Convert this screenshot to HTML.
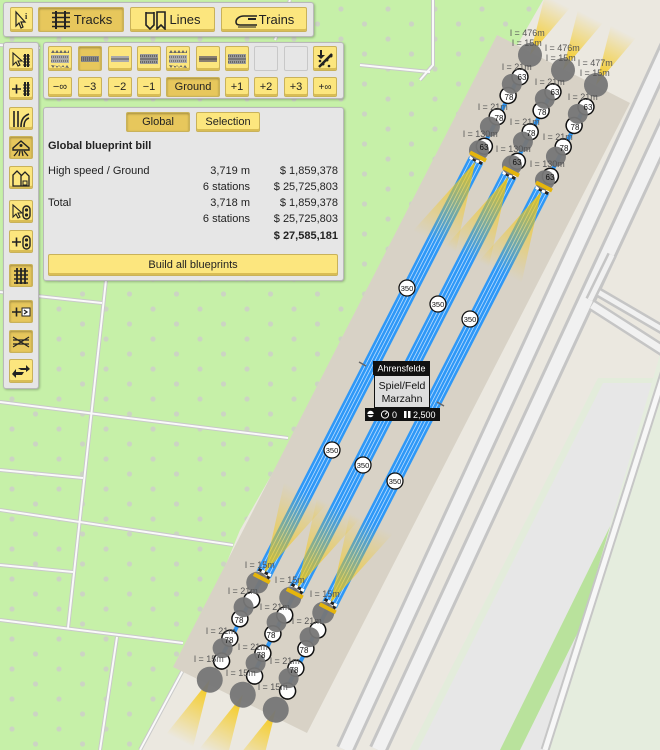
<!DOCTYPE html>
<html><head><meta charset="utf-8">
<style>
html,body{margin:0;padding:0;width:660px;height:750px;overflow:hidden;background:#ebe8e0;font-family:"Liberation Sans","DejaVu Sans",sans-serif;}
#wrap{position:relative;width:660px;height:750px;overflow:hidden}
#map{position:absolute;left:0;top:0}
.panel{position:absolute;background:#e6e6e6;border:1px solid #b9b9b9;border-radius:3px;box-shadow:1px 1px 2px rgba(0,0,0,.25);}
.btn{position:absolute;background:#fce67e;border:1px solid #c9b25a;border-radius:2px;box-shadow:inset 0 -2px 0 #d9bd55;box-sizing:border-box;font-size:13px;color:#222;display:flex;align-items:center;justify-content:center;}
.sel{background:#e7c75c;box-shadow:inset 0 1px 2px rgba(0,0,0,.3);}
.emp{background:#e6e6e6;border:1px solid #c8c8c8;box-shadow:none}
.sm{font-size:11px}
.t{position:absolute;font-size:11px;color:#222;white-space:nowrap}
.r{text-align:right}
</style></head><body><div id="wrap">
<svg id="map" width="660" height="750" viewBox="0 0 660 750">
<defs>
<pattern id="dots" width="47" height="30" patternUnits="userSpaceOnUse" x="8" y="5">
<circle cx="4" cy="4" r="2.6" fill="#ccd4c3"/><circle cx="27.5" cy="19" r="2.6" fill="#ccd4c3"/>
</pattern>
<linearGradient id="fo" x1="0" y1="0" x2="1" y2="0"><stop offset="0" stop-color="#f7c80c"/><stop offset="1" stop-color="#f7c80c" stop-opacity="0"/></linearGradient>
<linearGradient id="fo2" x1="0" y1="0" x2="1" y2="0"><stop offset="0" stop-color="#f7c80c" stop-opacity="0"/><stop offset="1" stop-color="#f7c80c"/></linearGradient>
<linearGradient id="fi" x1="0" y1="0" x2="1" y2="0"><stop offset="0" stop-color="#f7c80c" stop-opacity=".9"/><stop offset="1" stop-color="#f7c80c" stop-opacity="0"/></linearGradient>
<linearGradient id="fi2" x1="0" y1="0" x2="1" y2="0"><stop offset="0" stop-color="#f7c80c" stop-opacity="0"/><stop offset="1" stop-color="#f7c80c" stop-opacity=".9"/></linearGradient>
<g id="trk">
 <polygon points="0,0 -60,-14 -60,14" fill="url(#fo2)"/>
 <rect x="20" y="-2" width="660" height="4" fill="#2b95f5"/>
 <rect x="118" y="-8" width="466" height="16" fill="#2e98f7"/>
 <g stroke="#b9dcff" stroke-width=".8"><line x1="118" y1="-5" x2="584" y2="-5"/><line x1="118" y1="-1.5" x2="584" y2="-1.5"/><line x1="118" y1="1.5" x2="584" y2="1.5"/><line x1="118" y1="5" x2="584" y2="5"/></g>
 <polygon points="120,0 210,-24 210,24" fill="url(#fi)"/>
 <polygon points="582,0 492,-24 492,24" fill="url(#fi2)"/>
 <polygon points="702,0 770,-16 770,14" fill="url(#fo)"/>
 <rect x="114" y="-7" width="6" height="14" fill="#222"/><rect x="114" y="-7" width="3" height="3.5" fill="#fff"/><rect x="117" y="-3.5" width="3" height="3.5" fill="#fff"/><rect x="114" y="0" width="3" height="3.5" fill="#fff"/><rect x="117" y="3.5" width="3" height="3.5" fill="#fff"/>
 <rect x="580" y="-7" width="6" height="14" fill="#222"/><rect x="580" y="-7" width="3" height="3.5" fill="#fff"/><rect x="583" y="-3.5" width="3" height="3.5" fill="#fff"/><rect x="580" y="0" width="3" height="3.5" fill="#fff"/><rect x="583" y="3.5" width="3" height="3.5" fill="#fff"/>
 <g fill="#fff" stroke="#111" stroke-width="1.5"><circle cx="24" cy="-1" r="8"/><circle cx="46" cy="1" r="8"/><circle cx="70" cy="1" r="8"/><circle cx="102" cy="-1" r="8"/><circle cx="612" cy="-1" r="8"/><circle cx="634" cy="1" r="8"/><circle cx="656" cy="1" r="8"/><circle cx="680" cy="-2" r="8"/></g>
 <g fill="#777" opacity=".95"><circle cx="0" cy="0" r="12"/><circle cx="34" cy="3" r="10"/><circle cx="82" cy="3" r="10"/><circle cx="108" cy="2" r="10"/><circle cx="594" cy="2" r="11"/><circle cx="622" cy="3" r="10"/><circle cx="668" cy="3" r="10"/><circle cx="702" cy="0" r="13"/></g>
 <rect x="112" y="-9" width="4" height="18" fill="#e5b50c"/><rect x="586" y="-9" width="4" height="18" fill="#e5b50c"/>
</g>
</defs>
<polygon points="0,0 543,0 240,530 183,670 140,750 0,750" fill="#c6f0a8"/>
<polygon points="0,0 543,0 240,530 183,670 140,750 0,750" fill="url(#dots)"/>
<g stroke="#c9c9c9" stroke-width="4" fill="none" id="pth">
<path d="M433,0 L433,65 L420,80"/><path d="M0,45 L40,48"/><path d="M360,65 L430,72"/>
<path d="M106,280 L68,628"/><path d="M0,292 L102,303"/><path d="M0,402 L288,438"/><path d="M0,470 L83,478"/>
<path d="M0,510 L233,545"/><path d="M0,565 L73,572"/><path d="M0,620 L183,643"/><path d="M117,637 L100,750"/>
<path d="M183,670 L140,750"/><path d="M290,0 L275,40"/>
</g>
<g stroke="#fafafa" stroke-width="2" fill="none">
<path d="M433,0 L433,65 L420,80"/><path d="M0,45 L40,48"/><path d="M360,65 L430,72"/>
<path d="M106,280 L68,628"/><path d="M0,292 L102,303"/><path d="M0,402 L288,438"/><path d="M0,470 L83,478"/>
<path d="M0,510 L233,545"/><path d="M0,565 L73,572"/><path d="M0,620 L183,643"/><path d="M117,637 L100,750"/>
<path d="M183,670 L140,750"/><path d="M290,0 L275,40"/>
</g>
<polygon points="598,378 660,378 660,750 410,750" fill="#e3ecdb"/>
<polygon points="603,383 660,383 660,750 418,750" fill="#e7e7e7"/>
<polygon points="654,437 674,437 520,750 500,750" fill="#b9e29c"/>
<polygon points="705,200 760,200 760,750 545,750" fill="#e5edde"/>
<g fill="none"><path d="M700,260 L545,750" stroke="#c6c6c6" stroke-width="9"/><path d="M700,260 L545,750" stroke="#f7f7f7" stroke-width="5"/></g>
<g fill="none">
<path d="M690,0 L345,750" stroke="#c5c5c5" stroke-width="19"/><path d="M690,0 L345,750" stroke="#f1f1f1" stroke-width="13"/>
<path d="M725,0 L378,750" stroke="#c5c5c5" stroke-width="19"/><path d="M725,0 L378,750" stroke="#f1f1f1" stroke-width="13"/>
<path d="M592,305 L670,355" stroke="#c5c5c5" stroke-width="12"/><path d="M592,305 L670,355" stroke="#f1f1f1" stroke-width="7"/>
<path d="M598,292 L670,334" stroke="#c5c5c5" stroke-width="10"/><path d="M598,292 L670,334" stroke="#f1f1f1" stroke-width="5"/>
<path d="M612,255 L590,300" stroke="#c5c5c5" stroke-width="10"/><path d="M612,255 L590,300" stroke="#f1f1f1" stroke-width="5"/>
</g>
<polygon points="497,35 630,103 307,733 173,667" fill="#d8d2c6"/>

<use href="#trk" transform="translate(530,55) rotate(117.14)"/>
<use href="#trk" transform="translate(563,70) rotate(117.14)"/>
<use href="#trk" transform="translate(596,85) rotate(117.14)"/>

<g font-family="Liberation Sans, sans-serif" font-size="8" text-anchor="middle" fill="#111">
<text x="522" y="80">63</text><text x="509" y="100">78</text><text x="499" y="121">78</text><text x="484" y="150">63</text>
<text x="555" y="95">63</text><text x="542" y="115">78</text><text x="531" y="136">78</text><text x="517" y="165">63</text>
<text x="588" y="110">63</text><text x="575" y="130">78</text><text x="564" y="151">78</text><text x="550" y="180">63</text>
<text x="239" y="623">78</text><text x="229" y="643">78</text>
<text x="271" y="638">78</text><text x="261" y="658">78</text>
<text x="304" y="653">78</text><text x="294" y="673">78</text>
</g>
<g font-family="Liberation Sans, sans-serif" font-size="9" fill="#555">
<text x="510" y="36">l = 476m</text><text x="512" y="46">l = 15m</text>
<text x="545" y="51">l = 476m</text><text x="546" y="61">l = 15m</text>
<text x="578" y="66">l = 477m</text><text x="580" y="76">l = 15m</text>
<text x="502" y="70">l = 21m</text><text x="535" y="85">l = 21m</text><text x="568" y="100">l = 21m</text>
<text x="478" y="110">l = 21m</text><text x="510" y="125">l = 21m</text><text x="543" y="140">l = 21m</text>
<text x="463" y="137">l = 130m</text><text x="496" y="152">l = 130m</text><text x="530" y="167">l = 130m</text>
<text x="245" y="568">l = 15m</text><text x="275" y="583">l = 15m</text><text x="310" y="597">l = 15m</text>
<text x="228" y="594">l = 21m</text><text x="260" y="610">l = 21m</text><text x="292" y="624">l = 21m</text>
<text x="206" y="634">l = 21m</text><text x="238" y="650">l = 21m</text><text x="270" y="664">l = 21m</text>
<text x="194" y="662">l = 15m</text><text x="226" y="676">l = 15m</text><text x="258" y="690">l = 15m</text>
</g>
<g fill="#fff" stroke="#111" stroke-width="1.3">
<circle cx="407" cy="288" r="8"/><circle cx="438" cy="304" r="8"/><circle cx="470" cy="319" r="8"/>
<circle cx="332" cy="450" r="8"/><circle cx="363" cy="465" r="8"/><circle cx="395" cy="481" r="8"/>
</g>
<g font-family="Liberation Sans, sans-serif" font-size="7.5" text-anchor="middle" fill="#111">
<text x="407" y="291">350</text><text x="438" y="307">350</text><text x="470" y="322">350</text>
<text x="332" y="453">350</text><text x="363" y="468">350</text><text x="395" y="484">350</text>
</g>
<line x1="359" y1="362" x2="366" y2="366" stroke="#666" stroke-width="1.5"/><line x1="437" y1="402" x2="444" y2="406" stroke="#666" stroke-width="1.5"/>
<rect x="373" y="361" width="57" height="14" fill="#111"/>
<text x="401.5" y="371.5" font-family="Liberation Sans, sans-serif" font-size="9" fill="#fff" text-anchor="middle">Ahrensfelde</text>
<rect x="374.5" y="375.5" width="55" height="32" fill="#dedede" stroke="#111" stroke-width="1"/>
<text x="402" y="389" font-family="Liberation Sans, sans-serif" font-size="10.5" fill="#111" text-anchor="middle">Spiel/Feld</text>
<text x="402" y="402" font-family="Liberation Sans, sans-serif" font-size="10.5" fill="#111" text-anchor="middle">Marzahn</text>
<rect x="365" y="408" width="75" height="13" fill="#111"/>
<circle cx="370.5" cy="414" r="3.2" fill="#fff"/><rect x="367" y="414" width="7" height="1.2" fill="#111"/>
<circle cx="385" cy="414.5" r="3.6" fill="none" stroke="#fff" stroke-width="1"/><path d="M385,414.5 L387,412.5" stroke="#fff"/>
<text x="392" y="418" font-family="Liberation Sans, sans-serif" font-size="9" fill="#fff">0</text>
<rect x="404" y="411" width="2.5" height="7" fill="#fff"/><rect x="408" y="411" width="2.5" height="7" fill="#fff"/>
<text x="413" y="418" font-family="Liberation Sans, sans-serif" font-size="9" fill="#fff">2,500</text>
</svg>

<div class="panel" style="left:3px;top:2px;width:309px;height:33px"></div>
<div class="btn" style="left:10px;top:7px;width:23px;height:25px">
<svg width="18" height="20" viewBox="0 0 18 20"><path d="M3,2 L3,16 L6,13 L8,18 L10,17 L8,12 L12,12 Z" fill="none" stroke="#222" stroke-width="1.2"/><text x="12" y="9" font-size="8" font-weight="bold" font-family="Liberation Serif,serif" fill="#222">i</text></svg></div>
<div class="btn sel" style="left:38px;top:7px;width:86px;height:25px"><svg width="22" height="20" viewBox="0 0 22 20"><g stroke="#222" stroke-width="2"><line x1="6" y1="1" x2="6" y2="19"/><line x1="15" y1="1" x2="15" y2="19"/></g><g stroke="#222" stroke-width="1.6"><line x1="2" y1="3" x2="20" y2="3"/><line x1="2" y1="7.5" x2="20" y2="7.5"/><line x1="2" y1="12" x2="20" y2="12"/><line x1="2" y1="16.5" x2="20" y2="16.5"/></g></svg><span style="margin-left:2px">Tracks</span></div>
<div class="btn" style="left:130px;top:7px;width:85px;height:25px"><svg width="24" height="20" viewBox="0 0 24 20"><path d="M2,2 L2,15 L6,19 L10,15 L10,2 M2,3 L10,3" fill="none" stroke="#222" stroke-width="1.6"/><path d="M13,2 L13,19 L17,15 L21,19 L21,2 Z" fill="none" stroke="#222" stroke-width="1.6"/></svg><span style="margin-left:1px">Lines</span></div>
<div class="btn" style="left:221px;top:7px;width:86px;height:25px"><svg width="24" height="16" viewBox="0 0 24 16"><path d="M23,4 L10,4 C5,4 2,7 2,10 C2,12 3,13 6,13 L23,13" fill="none" stroke="#222" stroke-width="1.6"/><rect x="14" y="6" width="8" height="2" fill="#222"/><line x1="4" y1="15" x2="22" y2="15" stroke="#222"/></svg><span style="margin-left:1px">Trains</span></div>

<div class="panel" style="left:3px;top:42px;width:34px;height:345px"></div>
<div class="btn" style="left:9px;top:48px;width:24px;height:23px"><svg width="20" height="18" viewBox="0 0 20 18"><path d="M2,2 L2,14 L5,11 L7,15 L9,14 L7,10 L11,10 Z" fill="none" stroke="#222" stroke-width="1.1"/><rect x="13" y="3" width="2" height="13" fill="#222"/><rect x="16" y="3" width="2" height="13" fill="#222"/><g stroke="#222"><line x1="12" y1="5" x2="19" y2="5"/><line x1="12" y1="8" x2="19" y2="8"/><line x1="12" y1="11" x2="19" y2="11"/><line x1="12" y1="14" x2="19" y2="14"/></g></svg></div>
<div class="btn" style="left:9px;top:77px;width:24px;height:23px"><svg width="20" height="18" viewBox="0 0 20 18"><path d="M1,9 L10,9 M5.5,4.5 L5.5,13.5" stroke="#222" stroke-width="1.6"/><rect x="13" y="2" width="2" height="14" fill="#222"/><rect x="16" y="2" width="2" height="14" fill="#222"/><g stroke="#222"><line x1="12" y1="5" x2="19" y2="5"/><line x1="12" y1="8" x2="19" y2="8"/><line x1="12" y1="11" x2="19" y2="11"/><line x1="12" y1="14" x2="19" y2="14"/></g></svg></div>
<div class="btn" style="left:9px;top:107px;width:24px;height:23px"><svg width="20" height="18" viewBox="0 0 20 18"><path d="M3,1 L3,17 M7,1 L7,17 M10,17 C10,9 13,6 18,4 M13,17 C13,11 15,9 18,8" fill="none" stroke="#222" stroke-width="1.6"/></svg></div>
<div class="btn sel" style="left:9px;top:136px;width:24px;height:23px"><svg width="20" height="18" viewBox="0 0 20 18"><path d="M2,9 L10,2 L18,9 L18,11 L2,11 Z" fill="none" stroke="#222" stroke-width="1.4"/><circle cx="10" cy="6.5" r="1.5" fill="#222"/><path d="M3,17 L7,12 M8,17 L9,12 M12,17 L11,12 M17,17 L13,12" stroke="#222" stroke-width="1.3"/></svg></div>
<div class="btn" style="left:9px;top:166px;width:24px;height:23px"><svg width="20" height="18" viewBox="0 0 20 18"><path d="M2,17 L2,6 L6,2 L10,6 L10,17 Z M10,17 L10,7 L14,3 L18,7 L18,17 Z" fill="none" stroke="#222" stroke-width="1.3"/><rect x="12" y="12" width="4" height="4" fill="none" stroke="#222"/></svg></div>
<div class="btn" style="left:9px;top:200px;width:24px;height:23px"><svg width="20" height="18" viewBox="0 0 20 18"><path d="M2,2 L2,14 L5,11 L7,15 L9,14 L7,10 L11,10 Z" fill="none" stroke="#222" stroke-width="1.1"/><rect x="12" y="3" width="7" height="13" rx="3.5" fill="none" stroke="#222" stroke-width="1.4"/><circle cx="15.5" cy="7" r="1.6" fill="#222"/><circle cx="15.5" cy="12" r="1.6" fill="#222"/></svg></div>
<div class="btn" style="left:9px;top:230px;width:24px;height:23px"><svg width="20" height="18" viewBox="0 0 20 18"><path d="M1,9 L10,9 M5.5,4.5 L5.5,13.5" stroke="#222" stroke-width="1.6"/><rect x="12" y="3" width="7" height="13" rx="3.5" fill="none" stroke="#222" stroke-width="1.4"/><circle cx="15.5" cy="7" r="1.6" fill="#222"/><circle cx="15.5" cy="12" r="1.6" fill="#222"/></svg></div>
<div class="btn sel" style="left:9px;top:264px;width:24px;height:23px"><svg width="18" height="18" viewBox="0 0 18 18"><g stroke="#222" stroke-width="1.8"><line x1="5" y1="1" x2="5" y2="17"/><line x1="9" y1="1" x2="9" y2="17"/><line x1="13" y1="1" x2="13" y2="17"/></g><g stroke="#222" stroke-width="1.4"><line x1="2" y1="4" x2="16" y2="4"/><line x1="2" y1="8" x2="16" y2="8"/><line x1="2" y1="12" x2="16" y2="12"/><line x1="2" y1="16" x2="16" y2="16"/></g></svg></div>
<div class="btn sel" style="left:9px;top:300px;width:24px;height:23px"><svg width="20" height="18" viewBox="0 0 20 18"><path d="M1,9 L10,9 M5.5,4.5 L5.5,13.5" stroke="#222" stroke-width="1.6"/><rect x="11" y="5" width="8" height="8" fill="#fff" stroke="#222"/><path d="M13,7 L16,9 L13,11" fill="none" stroke="#222" stroke-width="1.3"/></svg></div>
<div class="btn sel" style="left:9px;top:330px;width:24px;height:23px"><svg width="20" height="18" viewBox="0 0 20 18"><path d="M2,4 L18,14 M2,14 L18,4 M2,7 L18,7 M2,11 L18,11" stroke="#222" stroke-width="1.2" fill="none"/></svg></div>
<div class="btn" style="left:9px;top:359px;width:24px;height:24px"><svg width="20" height="18" viewBox="0 0 20 18"><path d="M7,6 L15,6 L15,3 L19,7 L15,10 L15,8 L10,8 Z" fill="#222"/><path d="M13,10 L5,10 L5,7 L1,12 L5,16 L5,13 L11,13 Z" fill="#222"/></svg></div>

<div class="panel" style="left:43px;top:42px;width:299px;height:55px"></div>
<div class="btn" style="left:48px;top:46px;width:24px;height:25px"><svg width="20" height="20" viewBox="0 0 20 20"><path d="M1,4 L3,1 L5,4 L7,1 L9,4 L11,1 L13,4 L15,1 L17,4 L19,1 L19,4Z M1,16 L3,19 L5,16 L7,19 L9,16 L11,19 L13,16 L15,19 L17,16 L19,19 Z" fill="#666"/><rect x="1" y="6" width="18" height="8" fill="#aaa"/><line x1="1" y1="8" x2="19" y2="8" stroke="#444" stroke-dasharray="1 1"/><line x1="1" y1="12" x2="19" y2="12" stroke="#444" stroke-dasharray="1 1"/></svg></div>
<div class="btn sel" style="left:78px;top:46px;width:24px;height:25px"><svg width="20" height="20" viewBox="0 0 20 20"><rect x="1" y="7" width="18" height="6" fill="#888"/><line x1="1" y1="9" x2="19" y2="9" stroke="#444" stroke-dasharray="1 1"/><line x1="1" y1="11" x2="19" y2="11" stroke="#444" stroke-dasharray="1 1"/></svg></div>
<div class="btn" style="left:108px;top:46px;width:24px;height:25px"><svg width="20" height="20" viewBox="0 0 20 20"><rect x="1" y="7" width="18" height="6" fill="#aaa"/><line x1="1" y1="10" x2="19" y2="10" stroke="#555"/></svg></div>
<div class="btn" style="left:137px;top:46px;width:24px;height:25px"><svg width="20" height="20" viewBox="0 0 20 20"><rect x="1" y="5" width="18" height="10" fill="#999"/><line x1="1" y1="7" x2="19" y2="7" stroke="#333" stroke-dasharray="1 1"/><line x1="1" y1="13" x2="19" y2="13" stroke="#333" stroke-dasharray="1 1"/><line x1="1" y1="10" x2="19" y2="10" stroke="#555"/></svg></div>
<div class="btn" style="left:166px;top:46px;width:24px;height:25px"><svg width="20" height="20" viewBox="0 0 20 20"><path d="M1,4 L3,1 L5,4 L7,1 L9,4 L11,1 L13,4 L15,1 L17,4 L19,1 L19,4Z M1,16 L3,19 L5,16 L7,19 L9,16 L11,19 L13,16 L15,19 L17,16 L19,19 Z" fill="#666"/><rect x="1" y="6" width="18" height="8" fill="#aaa"/><line x1="1" y1="8" x2="19" y2="8" stroke="#444" stroke-dasharray="1 1"/><line x1="1" y1="12" x2="19" y2="12" stroke="#444" stroke-dasharray="1 1"/></svg></div>
<div class="btn" style="left:196px;top:46px;width:24px;height:25px"><svg width="20" height="20" viewBox="0 0 20 20"><rect x="1" y="7" width="18" height="6" fill="#8a8070"/><line x1="1" y1="10" x2="19" y2="10" stroke="#444"/></svg></div>
<div class="btn" style="left:225px;top:46px;width:24px;height:25px"><svg width="20" height="20" viewBox="0 0 20 20"><rect x="1" y="5" width="18" height="10" fill="#999"/><line x1="1" y1="7" x2="19" y2="7" stroke="#333" stroke-dasharray="1 1"/><line x1="1" y1="13" x2="19" y2="13" stroke="#333" stroke-dasharray="1 1"/><line x1="1" y1="10" x2="19" y2="10" stroke="#555"/></svg></div>
<div class="btn emp" style="left:254px;top:46px;width:24px;height:25px"></div>
<div class="btn emp" style="left:284px;top:46px;width:24px;height:25px"></div>
<div class="btn" style="left:313px;top:46px;width:24px;height:25px"><svg width="20" height="20" viewBox="0 0 20 20"><path d="M5,1 L5,6 L2,6 L6,10 L10,6 L7,6 L7,1 Z" fill="#222"/><path d="M4,18 L17,5" stroke="#222" stroke-width="2.5"/><g fill="#222"><circle cx="8" cy="15" r="1.5"/><circle cx="12" cy="11" r="1.5"/><circle cx="16" cy="7" r="1.5"/><circle cx="5" cy="12" r="1.3"/><circle cx="14" cy="17" r="1.3"/></g></svg></div>

<div class="btn sm" style="left:48px;top:77px;width:24px;height:20px">−∞</div>
<div class="btn sm" style="left:78px;top:77px;width:24px;height:20px">−3</div>
<div class="btn sm" style="left:108px;top:77px;width:24px;height:20px">−2</div>
<div class="btn sm" style="left:137px;top:77px;width:24px;height:20px">−1</div>
<div class="btn sm sel" style="left:166px;top:77px;width:54px;height:20px">Ground</div>
<div class="btn sm" style="left:225px;top:77px;width:24px;height:20px">+1</div>
<div class="btn sm" style="left:254px;top:77px;width:24px;height:20px">+2</div>
<div class="btn sm" style="left:284px;top:77px;width:24px;height:20px">+3</div>
<div class="btn sm" style="left:313px;top:77px;width:24px;height:20px;font-size:10px">+∞</div>

<div class="panel" style="left:43px;top:107px;width:299px;height:172px"></div>
<div class="btn sm sel" style="left:126px;top:112px;width:64px;height:20px">Global</div>
<div class="btn sm" style="left:196px;top:112px;width:64px;height:20px">Selection</div>
<div class="t" style="left:48px;top:140px;font-weight:bold">Global blueprint bill</div>
<div class="t" style="left:48px;top:165px">High speed / Ground</div>
<div class="t r" style="left:150px;top:165px;width:100px">3,719 m</div>
<div class="t r" style="left:238px;top:165px;width:100px">$ 1,859,378</div>
<div class="t r" style="left:150px;top:181px;width:100px">6 stations</div>
<div class="t r" style="left:238px;top:181px;width:100px">$ 25,725,803</div>
<div class="t" style="left:48px;top:197px">Total</div>
<div class="t r" style="left:150px;top:197px;width:100px">3,718 m</div>
<div class="t r" style="left:238px;top:197px;width:100px">$ 1,859,378</div>
<div class="t r" style="left:150px;top:213px;width:100px">6 stations</div>
<div class="t r" style="left:238px;top:213px;width:100px">$ 25,725,803</div>
<div class="t r" style="left:238px;top:230px;width:100px;font-weight:bold">$ 27,585,181</div>
<div class="btn sm" style="left:48px;top:254px;width:290px;height:22px">Build all blueprints</div>
</div></body></html>
